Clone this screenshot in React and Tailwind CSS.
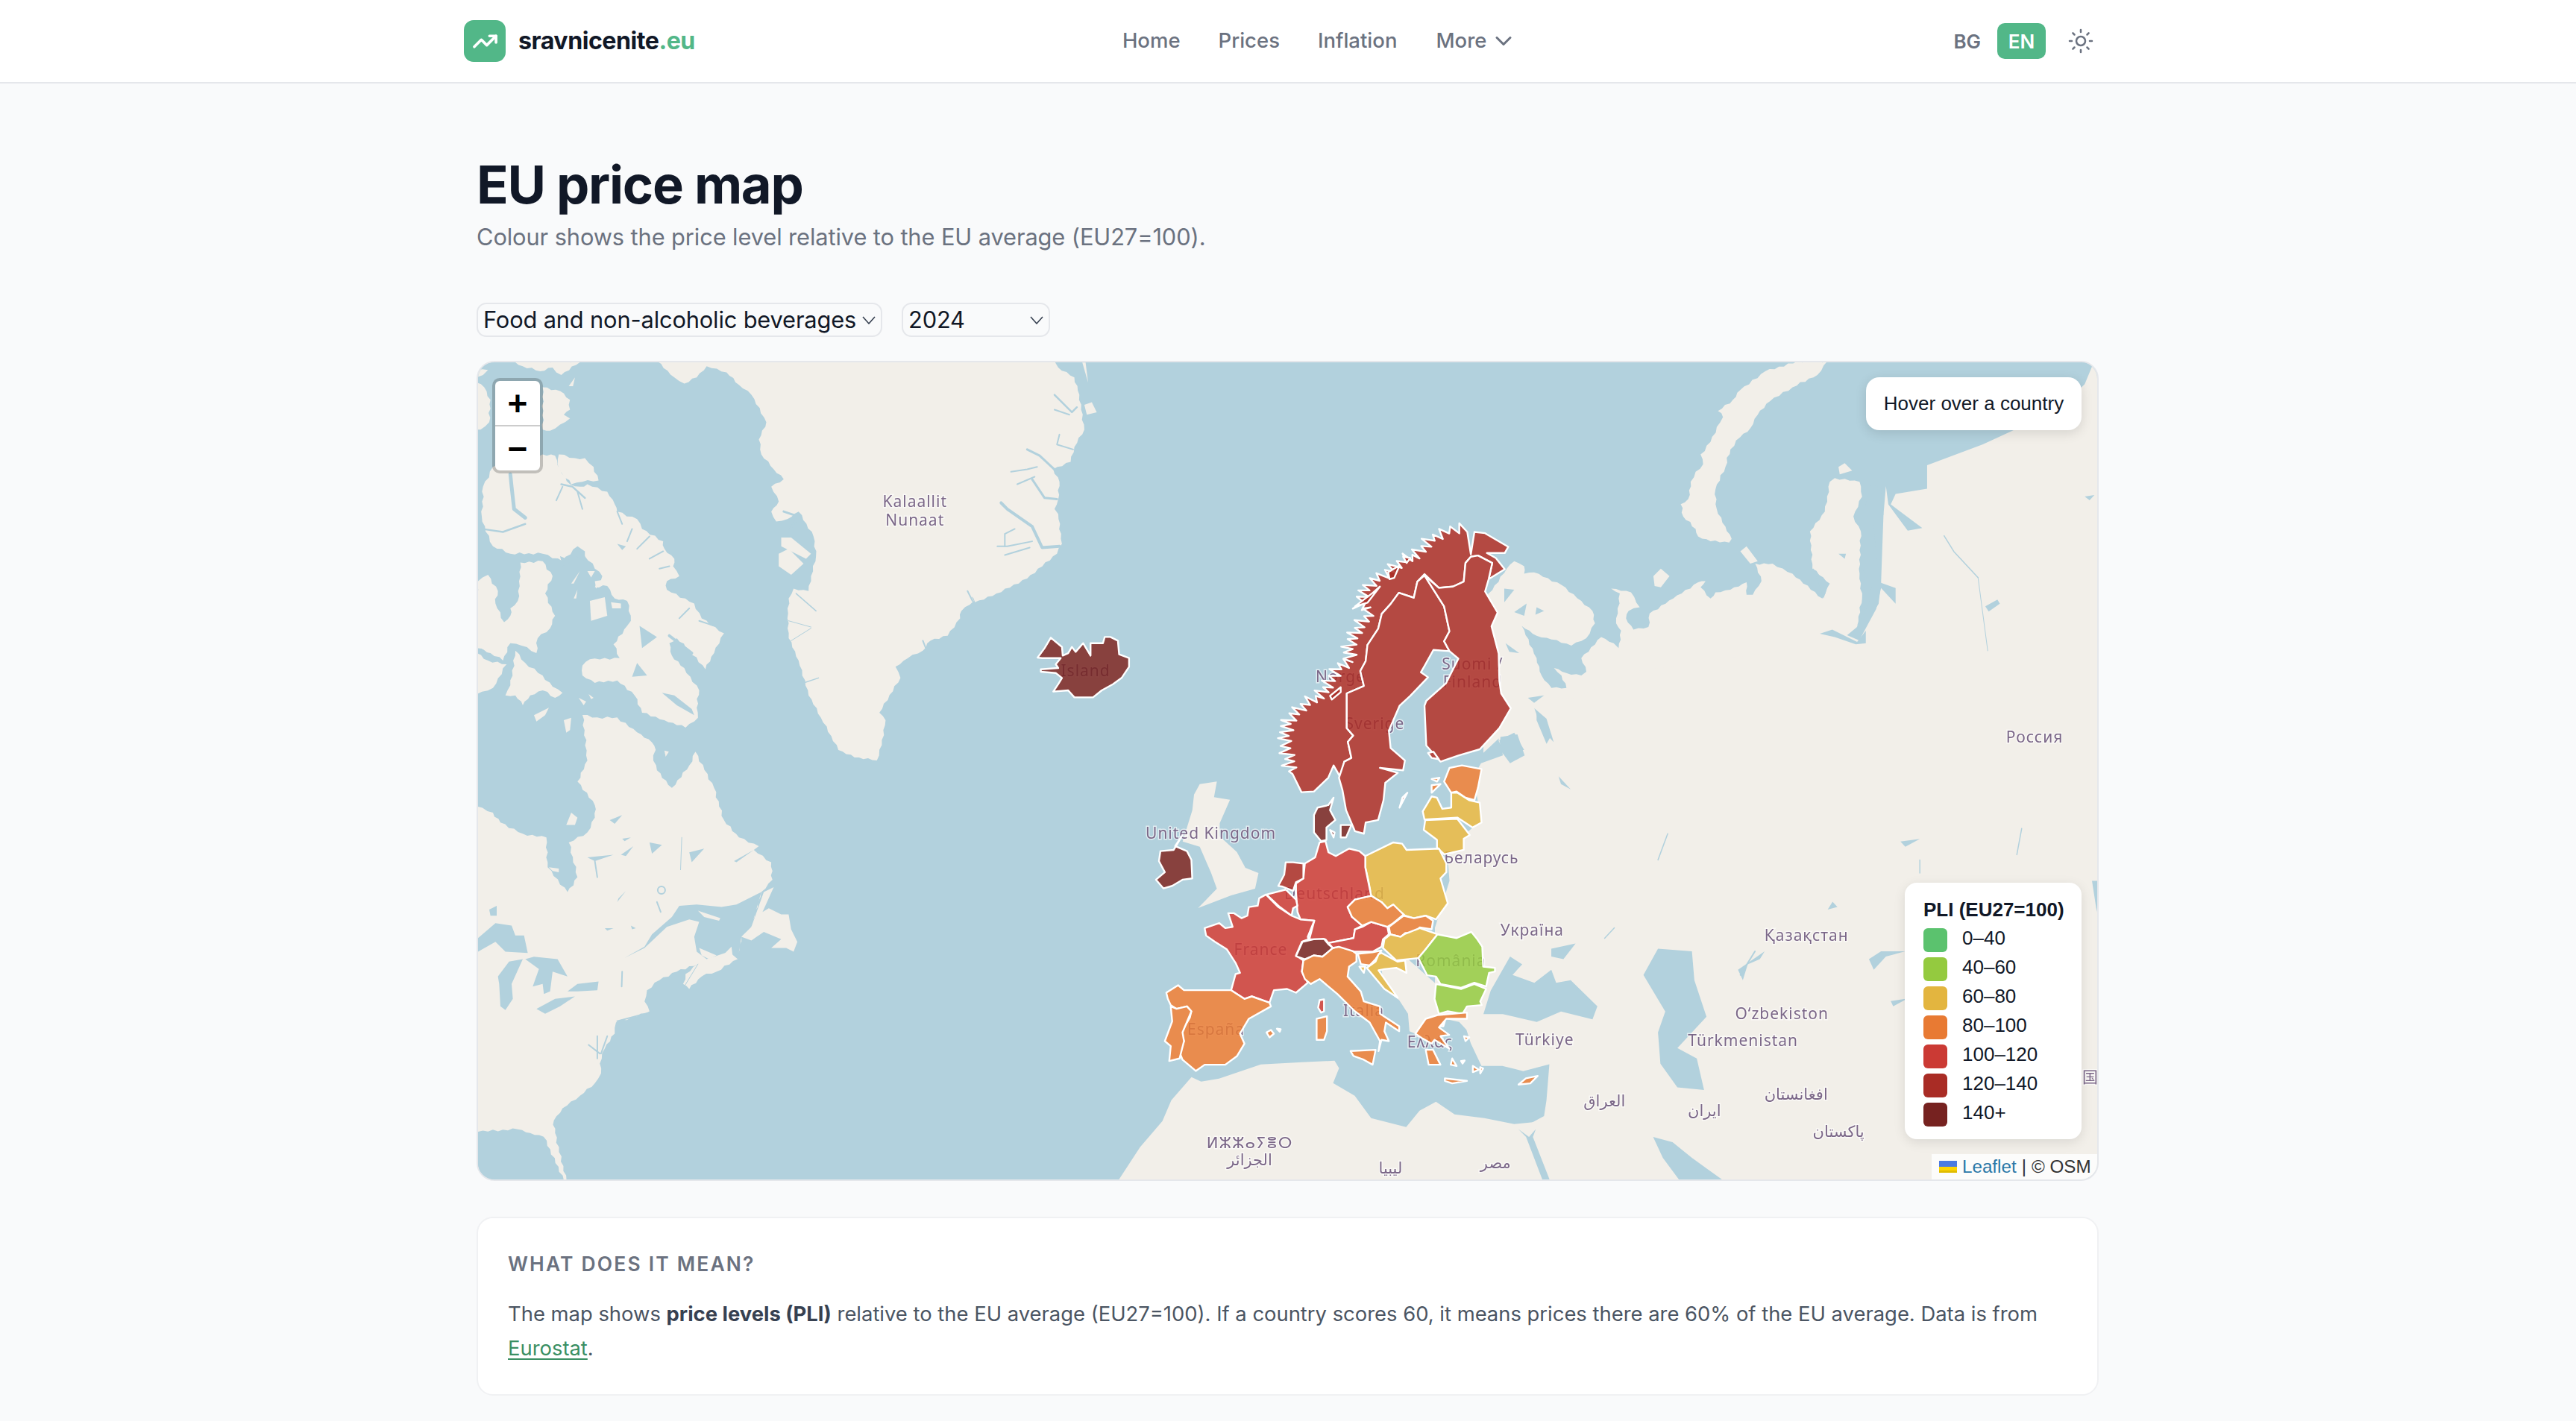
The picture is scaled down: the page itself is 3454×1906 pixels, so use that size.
import React from "react";
import { TrendingUp, ChevronDown, Sun } from "lucide-react";

const Z8 = "translate(1800 480) scale(.6505 .7015)";
const Z7 = "translate(640 480) scale(.7653 .7015)";
const Z3 = "translate(1350 680) scale(.4783 .3333)";
const Z4 = "translate(1500 1100) scale(.3954 .3333)";
const A = "translate(640 486) scale(.3333)";
const B = "translate(640 1000) scale(.3333)";
const G = "translate(1030 486) scale(.3333)";
const D = "translate(1980 486) scale(.3333)";

const LAND = "#f2efe9";
const WATER = "#b2d1dd";
const C = { g: "#94ca3f", y: "#e3b53f", o: "#e87a33", r: "#cb3a34", d: "#a92c25", x: "#762220" };

function jag(str, amp = 16, n = 4, closed = false) {
  const p = str.trim().split(/\s+/).map((s) => s.split(",").map(Number));
  if (closed) p.push(p[0]);
  const out = [];
  let k = 0;
  for (let i = 0; i < p.length - 1; i++) {
    const [a, b] = p[i];
    const [c, d] = p[i + 1];
    const len = Math.hypot(c - a, d - b) || 1;
    const nx = -(d - b) / len;
    const ny = (c - a) / len;
    const m = Math.max(1, Math.round((len / 40) * n));
    for (let j = 0; j < m; j++) {
      const t = j / m;
      k++;
      const o = j === 0 && closed ? 0 : (k % 2 ? 1 : -0.65) * amp * (0.3 + 0.7 * Math.abs(Math.sin(k * 2.3)));
      out.push(`${(a + (c - a) * t + nx * o).toFixed(1)},${(b + (d - b) * t + ny * o).toFixed(1)}`);
    }
  }
  if (!closed) out.push(p[p.length - 1].join(","));
  return out.join(" ");
}
const rough = (list, amp = 5, n = 2) => list.map((s) => jag(s, amp, n, true));

const landA = rough([
  "130,-5 415,-5 395,10 335,50 315,40 300,20 250,35 180,15",
  "-5,30 40,30 20,50 -5,60",
  "260,100 330,115 370,150 370,190 345,210 370,225 330,250 290,275 260,270",
  "-5,80 25,100 50,150 45,240 10,270 -5,270",
  "15,620 20,500 60,420 150,390 260,370 310,375 330,430 370,490 410,500 440,490 520,520 550,570 560,600 640,630 660,670 745,720 750,750 790,790 785,820 810,860 760,880 760,915 870,970 900,1030 990,1090 950,1170 915,1235 850,1160 800,1110 770,1130 780,1180 830,1230 890,1320 880,1390 885,1430 835,1470 750,1440 660,1410 630,1340 560,1280 470,1290 420,1260 420,1220 450,1195 570,1190 545,1135 600,1060 615,1040 600,960 550,950 520,900 470,905 500,860 430,780 400,740 340,800 260,770 130,770 60,740 30,680",
  "325,370 390,385 430,385 465,420 485,475 420,480 375,490 340,450 320,410",
  "-5,950 0,880 40,855 80,920 70,970 105,1045 130,1020 130,990 160,960 165,880 170,805 260,800 300,860 270,930 310,1020 290,1070 240,1110 235,1170 175,1140 130,1130 100,1200 50,1170 -5,1150",
  "-5,1170 40,1200 115,1215 60,1310 -5,1335",
  "150,1160 190,1210 260,1260 300,1305 340,1330 310,1350 260,1320 210,1340 180,1380 150,1340 110,1340 130,1300",
]);
const islesA = [
  "225,1420 285,1390 270,1420 235,1445",
  "345,1440 375,1430 370,1480 355,1490",
  "405,1350 435,1365 425,1380",
  "445,1335 465,1350 455,1355",
  "375,890 410,840 385,890",
  "440,840 470,840 455,865",
  "470,880 505,875 475,910",
  "385,950 400,915 395,950",
  "450,960 510,945 520,1020 455,1040",
  "535,965 575,970 575,990 540,990",
  "365,95 390,60 382,95",
];
const waterA = [
  "650,1060 720,1105 660,1150",
  "640,1210 680,1260 620,1265",
  "740,1330 800,1380 870,1420 860,1395 790,1340",
  "400,740 430,760 430,800 390,780",
  "330,780 380,800 340,820",
  "560,730 595,740 580,755",
];
const linesA = [
  ["130,450 135,500 145,590 190,625", 5],
  ["30,672 100,682 190,650", 2.5],
  ["335,490 380,500 430,545", 2.5],
  ["340,500 315,555", 2],
  ["400,520 420,590", 2],
  ["560,600 580,650", 2],
  ["620,670 600,720", 2],
  ["690,700 640,750", 2],
  ["745,760 690,790", 2],
  ["770,820 730,830", 2],
  ["850,990 810,1030", 2],
  ["950,1060 890,1040", 2],
  ["770,1100 860,1170", 4],
  ["150,1140 230,1175", 2],
  ["20,1160 70,1200", 3],
];

const mainB =
  "420,-123 480,-113 560,-113 640,-53 700,-13 715,17 705,40 720,100 780,170 850,80 875,25 950,170 990,300 1050,370 1130,405 1110,420 1180,470 1185,540 1140,590 1100,730 1060,770 1045,860 960,910 900,930 850,980 825,960 835,920 885,880 800,910 730,945 680,985 670,1030 690,1070 640,1090 555,1115 550,1160 510,1220 490,1280 495,1320 470,1360 410,1410 340,1460 305,1510 310,1560 356,1750 345,1750 264,1575 210,1560 160,1545 0,1555 -5,1555 -5,245 60,270 90,310 180,355 275,370 280,490 360,590 400,530 365,390 440,350 470,290 470,240 400,145 440,60";
const landB = [jag(mainB, 5, 2, true)];
const waterB = [
  "590,855 670,810 700,760 780,690 810,645 880,640 980,650 1040,640 1140,590 1100,730 1060,770 1045,860 1010,830 920,860 880,830 870,770 890,710 850,700 760,730 670,815",
  "0,775 70,715 135,725 150,765 185,765 200,835 110,830 70,790 0,830",
  "80,930 125,870 180,860 135,960 140,1020 110,1065 90,1050 85,960",
  "190,860 225,850 320,860 360,930 300,910 290,990 265,1000 260,960 220,970 245,900",
  "235,1060 310,1020 390,1010 330,1050 270,1080",
  "360,990 400,960 485,950 480,985 400,990",
  "45,660 75,645 75,685 50,685",
  "440,450 545,440 470,465",
  "690,390 740,400 700,435",
  "850,430 910,415 860,470",
  "580,375 615,370 590,385",
  "530,300 580,280 550,315",
  "1030,465 1110,420 1040,470",
  "560,630 595,585 565,615",
  "510,735 545,735 520,745",
  "615,725 635,735 620,740",
  "575,440 625,405 595,445",
];
const islesB = [
  "1060,770 1100,730 1150,590 1190,570 1145,670 1170,655 1220,680 1250,680 1260,740 1285,790 1270,830 1240,815 1180,815 1220,780 1150,750 1100,785",
  "885,665 975,695 970,705 910,690",
  "890,815 960,845 930,860 900,845",
  "985,845 1020,810 1025,850",
  "285,490 325,495 325,510 300,505",
  "355,320 375,270 400,290 390,320",
  "750,20 768,25 755,45",
];
const linesB = [
  ["480,1170 480,1260", 2],
  ["520,1170 495,1240", 2],
  ["560,1110 690,1075", 2],
  ["580,910 578,970", 2],
  ["445,1205 490,1240", 2],
  ["830,970 885,880", 1],
  ["470,465 480,530", 2],
  ["820,370 815,500", 1],
  ["720,630 735,670", 2],
];

const landG = rough([
  "-600,-5 1150,-5 1165,20 1230,60 1250,130 1270,270 1230,340 1215,400 1145,430 1170,480 1165,550 1150,590 1165,610 1180,730 1160,770 1040,870 900,940 830,965 800,920 825,960 775,1000 770,1030 720,1100 650,1120 620,1160 560,1190 510,1225 530,1270 445,1410 470,1440 455,1540 435,1602 345,1590 280,1560 210,1430 160,1340 120,1200 80,1110 75,1030 80,950 100,910 160,920 170,860 190,780 180,700 120,600 75,630 30,640 10,600 40,560 10,500 60,470 20,430 -30,370 -40,310 -10,240 -70,130 -120,90 -170,40 -250,15 -290,60 -340,85 -380,60 -450,-5",
], 4, 2);
const islesG = [
  "50,705 90,705 170,770 150,790 90,760 50,740",
  "40,770 80,750 140,810 90,855 40,820",
  "1270,170 1300,160 1320,200 1280,210",
  "1262,0 1275,0 1285,80",
];
const linesG = [
  ["1170,740 1100,745 1060,660 960,590 935,565", 4],
  ["1060,720 960,740 920,740", 2],
  ["990,670 950,690 950,740", 2],
  ["1050,745 950,775", 2],
  ["1160,440 1090,375 1040,350", 3],
  ["1080,420 1040,430 975,440", 2],
  ["1060,470 1110,545 1160,550", 3],
  ["1000,490 1070,460", 2],
  ["1225,350 1160,330 1170,290", 2],
  ["1150,130 1220,200 1240,180", 2.5],
  ["1150,190 1210,210", 2],
  ["60,600 120,620 80,680", 3],
  ["110,930 190,1000", 1.5],
  ["80,1040 170,1065", 1],
  ["90,1120 170,1070", 1],
  ["140,1290 200,1270", 1.5],
  ["800,920 820,960", 2],
  ["620,1120 640,1170", 2],
];

const mainD =
  "120,830 150,800 190,820 190,850 230,845 340,895 420,960 465,1000 475,1050 440,1110 380,1140 300,1115 240,1100 180,1060 240,1190 260,1260 300,1310 360,1310 340,1260 310,1230 360,1250 420,1260 440,1245 420,1190 500,1105 550,1130 570,1150 580,1080 560,1050 575,930 540,910 620,925 655,985 610,1000 600,1030 630,1075 690,1065 695,1010 790,950 890,885 920,880 900,905 940,950 960,925 1020,915 1085,885 1085,935 1110,935 1145,880 1120,810 1190,810 1270,850 1390,950 1420,890 1350,830 1340,680 1400,600 1420,480 1440,465 1540,480 1550,540 1515,620 1545,680 1540,850 1550,950 1530,1060 1565,1030 1565,1500 100,1565 60,1400 0,1000";
const landD = [
  jag(mainD, 4, 2, true),
  jag("1160,35 1290,-5 1410,-5 1370,50 1270,100 1180,155 1130,210 1100,265 1060,300 1020,350 1000,420 960,510 965,590 1000,660 1025,710 1015,725 940,720 890,700 880,670 830,620 820,570 850,550 860,480 880,440 910,410 900,370 940,320 965,260 990,220 970,195 1030,150 1060,110", 5, 2, true),
];
const islesD = [
  "1060,760 1085,740 1130,800 1100,810",
  "710,860 740,830 775,860 740,905 715,900",
  "1455,420 1480,405 1510,435 1460,450",
];
const waterD = [
  "1380,1092 1430,1075 1480,1100 1530,1125 1565,1080 1565,1130 1525,1135 1440,1105",
  "110,910 150,915 110,965",
  "150,1005 200,970 190,1020",
  "240,985 270,1000 235,1015",
  "115,1130 170,1170 130,1165",
  "205,1350 270,1340 230,1370",
  "240,1400 300,1500 280,1535 240,1440",
  "90,1520 150,1490 190,1560 100,1565",
  "1455,770 1485,770 1480,790",
  "1350,830 1415,890 1395,950 1355,830",
];

const landZ8 = [
  "290,600 340,660 480,650 600,600 900,560 1000,540 1060,540 1105,470 1110,430 1115,300 1120,245 1125,280 1165,330 1195,325 1130,280 1140,260 1205,250 1205,205 1320,165 1425,120 1480,95 1530,50 1550,5 1575,5 1575,1580 365,1580 365,1475 415,1450 420,1420 426,1351 372,1364 329,1354 286,1354 264,1311 255,1285 240,1270 190,1260 190,1090 220,1000 215,940 285,885 270,800 285,775 330,760 325,725 290,755",
];
const waterZ8 = [
  "1090,240 1110,250 1115,300 1095,320 1100,380 1110,430 1140,440 1140,470 1110,440 1100,480 1065,540 1040,530 1060,515 1085,470 1090,440 1070,400 1070,310",
  "325,725 360,720 375,760 345,775 325,750",
  "395,670 420,690 435,735 410,710",
  "445,800 470,825 450,815",
  "620,1180 650,1130 720,1135 725,1190 750,1260 720,1290 690,1320 730,1340 745,1400 690,1395 655,1350 650,1290 665,1250",
  "815,1170 870,1135 860,1150 835,1160 825,1190",
  "290,1255 305,1210 345,1145 370,1160 350,1180 395,1195 430,1170 440,1195 470,1190 525,1240 515,1265 450,1250 400,1270 330,1255",
  "430,1130 480,1120 455,1150 430,1145",
  "1085,1150 1110,1135 1160,1135 1120,1145 1095,1170",
  "1130,1230 1165,1225 1135,1240",
  "640,1490 680,1500 720,1530 795,1580 700,1580 660,1530",
  "362,1475 378,1490 415,1580 430,1580 392,1490 398,1475 384,1490",
  "1325,475 1350,462 1355,470 1332,485",
  "1150,925 1190,920 1160,935",
  "1010,1040 1020,1050 1000,1055",
  "1530,265 1550,262 1540,272",
  "1555,1060 1545,1000 1560,1000",
];
const linesZ8 = [
  ["1240,340 1260,370 1310,420", 1.5],
  ["1310,420 1330,560", 1],
  ["1400,900 1390,950", 1.5],
  ["650,960 670,910", 1.5],
  ["820,1180 850,1135", 2],
  ["540,1110 560,1090", 1.5],
  ["1190,960 1190,985", 1.5],
];

const balkans = "890,600 980,560 1075,660 1085,780 1040,800 1005,860 985,850 980,780 950,725 900,680";
const cap = "1180,775 1230,745 1245,770 1180,800";
const gb = "1265,815 1295,810 1290,840 1318,845 1300,890 1300,915 1330,945 1345,975 1368,985 1362,1015 1320,1028 1262,1052 1295,1015 1285,985 1265,935 1235,925 1252,865 1255,835";

const africa = "1498,1585 1528,1539 1558,1504 1570,1476 1597,1445 1610,1451 1634,1447 1690,1428 1745,1425 1789,1423 1795,1433 1787,1453 1816,1470 1838,1500 1885,1512 1903,1490 1925,1478 1950,1495 1990,1500 2030,1508 2060,1505 2075,1495 2085,1585";

const nor =
  jag("1275,85 1235,100 1190,130 1150,195 1110,215 1070,265 1020,310 985,390 1020,420 985,490 960,560 965,620 930,650 900,720 880,760 840,790 790,860 780,945 790,1000 800,1075", 26, 3.2) +
  " 825,1148 860,1145 900,1090 915,1040 935,1090 945,1025 965,1010 955,945 970,920 952,890 952,750 1000,720 990,660 1005,620 1010,555 1040,490 1050,430 1075,390 1098,345 1140,365 1150,300 1170,270 1210,325 1250,320 1280,300 1285,225 1300,200 1320,195 1360,225 1350,290 1395,250 1370,205 1345,185 1395,185 1405,160 1345,110 1340,105 1310,100 1300,190 1290,100";
const swe = "1150,300 1170,275 1225,400 1240,500 1225,540 1240,580 1195,575 1170,640 1160,665 1180,685 1130,760 1100,800 1070,900 1075,970 1115,1020 1110,1060 1045,1050 1095,1070 1060,1110 1055,1180 1040,1260 1005,1270 1000,1315 975,1305 950,1220 940,1140 930,1090 945,1025 965,1010 955,945 970,920 952,890 952,750 1000,720 990,660 1005,620 1010,555 1040,490 1050,430 1075,390 1098,345 1140,365";

const countries = [
  [G, C.x, "1135,1108 1180,1145 1183,1180 1205,1170 1220,1145 1235,1165 1265,1130 1295,1180 1295,1130 1345,1130 1352,1105 1375,1105 1405,1120 1410,1175 1450,1190 1450,1225 1420,1270 1385,1295 1340,1320 1305,1348 1230,1348 1205,1320 1145,1325 1165,1295 1180,1270 1155,1250 1095,1245 1095,1235 1165,1230 1155,1215 1175,1190 1100,1190 1082,1188 1110,1150"],
  [Z3, C.d, nor],
  [Z3, C.d, swe],
  [Z3, C.d, "1100,1210 1122,1150 1108,1170"],
  [Z3, C.d, "1170,275 1210,325 1250,320 1280,300 1285,225 1300,200 1320,195 1360,225 1350,290 1340,340 1375,425 1358,480 1378,590 1380,700 1385,750 1412,810 1380,890 1325,975 1265,1000 1215,1025 1175,960 1170,800 1175,780 1230,710 1265,610 1240,580 1225,540 1240,500 1225,400"],
  [Z3, C.d, "1180,990 1195,985 1210,1015 1190,1010"],
  [Z3, C.d, "975,400 1025,345 1045,320 1010,385"],
  [Z3, C.d, "1068,262 1100,235 1085,285 1072,290"],
  [Z3, C.d, "1110,200 1130,205 1120,225"],
  [Z3, C.d, "905,760 935,725 935,745 910,775"],
  [Z3, C.o, "1240,1050 1275,1040 1330,1055 1320,1130 1310,1180 1285,1170 1260,1145 1245,1150 1225,1105"],
  [Z3, C.o, "1190,1095 1212,1090 1205,1105"],
  [Z3, C.o, "1190,1120 1215,1115 1190,1150"],
  [Z3, C.y, "1190,1165 1205,1170 1220,1215 1245,1210 1245,1150 1262,1150 1295,1180 1325,1190 1330,1270 1305,1290 1262,1250 1170,1258 1165,1225"],
  [Z3, C.y, "1172,1260 1262,1255 1297,1320 1280,1335 1280,1380 1225,1398 1205,1370 1205,1340 1168,1300"],
  [Z3, C.x, "915,1170 900,1200 870,1210 860,1240 860,1310 880,1345 895,1340 895,1290 920,1260 905,1220"],
  [Z3, C.x, "935,1280 965,1280 950,1330 935,1330"],
  [Z3, C.x, "905,1300 918,1310 915,1330"],
  [Z4, C.y, "835,145 930,90 960,95 975,120 1085,115 1110,175 1110,210 1090,235 1115,335 1075,400 1040,385 1000,395 970,385 945,360 930,340 910,355 890,330 855,305 845,240 835,190"],
  [Z4, C.r, "680,90 700,85 710,130 735,145 780,115 815,125 835,145 835,190 855,305 800,320 775,350 790,390 825,425 800,440 795,475 710,495 700,480 645,480 662,405 615,400 605,370 600,290 600,255 625,235 630,175 665,150"],
  [Z4, C.d, "565,170 590,170 625,175 625,235 600,250 590,285 555,268 540,265 560,220"],
  [Z4, C.r, "500,300 565,280 600,320 605,345 590,355 585,385 545,350"],
  [Z4, C.r, "290,435 340,415 360,435 385,430 370,375 390,375 415,395 435,385 440,350 470,345 475,315 498,300 540,350 585,385 615,400 662,405 640,470 642,480 620,490 600,545 625,565 620,610 640,655 600,695 570,680 525,685 510,735 450,710 425,720 380,685 395,620 410,615 395,575 365,520 325,490 295,465"],
  [Z4, C.r, "680,725 695,722 695,770 685,775 675,755"],
  [Z4, C.x, "622,490 660,480 695,478 710,500 725,515 690,550 660,545 630,560 600,548"],
  [Z4, C.o, "625,565 660,545 690,550 725,515 745,510 775,512 805,538 805,570 780,590 775,630 820,690 830,730 885,750 885,780 950,830 950,850 905,815 900,850 915,890 890,885 880,930 885,890 850,815 800,770 740,700 680,640 650,660 630,640 620,610"],
  [Z4, C.o, "785,930 870,925 860,985 830,965 795,950"],
  [Z4, C.o, "670,800 705,790 705,850 695,885 670,885"],
  [Z4, C.r, "800,440 825,430 855,410 910,430 915,460 895,480 890,510 860,530 800,530 745,510 725,515 710,495 795,475"],
  [Z4, C.o, "775,350 800,320 855,305 890,330 910,355 930,340 965,380 930,415 910,430 855,410 825,425 790,390"],
  [Z4, C.o, "915,430 965,385 1000,395 1040,385 1065,405 1060,440 1020,432 1000,455 970,455 955,470 920,460"],
  [Z4, C.y, "900,480 920,460 955,470 970,458 1020,435 1080,460 1040,520 1020,555 940,565 895,515"],
  [Z4, C.o, "810,538 860,532 890,525 870,560 850,585 820,580"],
  [Z4, C.y, "880,540 890,535 945,570 970,565 975,615 940,595 900,600 880,605 945,715 900,680 840,595 870,570"],
  [Z4, C.y, "815,590 835,590 830,615"],
  [Z4, C.g, "1040,520 1080,460 1145,475 1195,450 1215,480 1232,510 1235,590 1275,595 1275,610 1255,615 1245,670 1205,655 1160,675 1090,660 1075,630 1045,625 1015,555"],
  [Z4, C.g, "1075,660 1160,680 1205,660 1245,680 1225,730 1230,745 1180,750 1165,780 1115,770 1085,780 1070,720"],
  [Z4, C.o, "1005,860 1040,800 1080,785 1180,775 1180,800 1110,800 1085,835 1120,865 1090,870 1120,920 1070,885 1060,900 1030,880"],
  [Z4, C.o, "1040,925 1065,925 1090,985 1050,985"],
  [Z4, C.o, "1105,1040 1180,1050 1130,1060 1105,1050"],
  [Z4, C.o, "1355,1065 1380,1040 1420,1030 1395,1060"],
  [Z4, C.o, "160,695 200,665 220,685 380,685 425,720 450,710 510,735 515,750 440,800 410,860 425,900 400,950 360,985 290,985 260,1010 215,965 205,935 220,890 210,855 240,795 245,770 230,750 195,760 175,745 165,720"],
  [Z4, C.o, "175,750 195,760 230,750 245,770 215,855 220,890 205,960 170,970 175,910 155,890 180,810"],
  [Z4, C.o, "500,855 515,845 525,860 510,875"],
  [Z4, C.o, "535,840 548,842 545,852"],
  [Z4, C.x, "140,125 185,120 195,100 215,60 190,105 230,125 245,160 248,235 215,240 180,265 150,275 125,240 155,210 135,165"],
  [Z4, C.o, "1090,830 1105,810 1100,830"],
  [Z4, C.o, "1170,870 1188,875 1175,890"],
  [Z4, C.o, "1160,970 1172,968 1165,980"],
  [Z4, C.o, "1130,960 1145,990 1125,985"],
  [Z4, C.o, "1200,990 1220,1005 1200,1015"],
  [Z4, C.o, "1225,995 1235,1000 1225,1020"],
];

const labels = [
  ["Kalaallit", 1226, 680],
  ["Nunaat", 1226, 705],
  ["Island", 1455, 907],
  ["Norge", 1797, 915],
  ["Sverige", 1843, 978],
  ["Suomi /", 1974, 898],
  ["Finland", 1974, 922],
  ["United Kingdom", 1623, 1125],
  ["Беларусь", 1986, 1158],
  ["Deutschland", 1789, 1206],
  ["France", 1690, 1281],
  ["Україна", 2054, 1255],
  ["România", 1945, 1296],
  ["Italia", 1828, 1363],
  ["España", 1630, 1388],
  ["Ελλάς", 1917, 1405],
  ["Türkiye", 2071, 1402],
  ["Қазақстан", 2422, 1262],
  ["O‘zbekiston", 2389, 1367],
  ["Türkmenistan", 2337, 1403],
  ["Россия", 2728, 996],
  ["العراق", 2151, 1484],
  ["ايران", 2285, 1497],
  ["افغانستان", 2408, 1475],
  ["پاکستان", 2465, 1525],
  ["ليبيا", 1864, 1574],
  ["مصر", 2005, 1567],
  ["ⵍⵣⵣⴰⵢⴻⵔ", 1675, 1540],
  ["الجزائر", 1675, 1563],
];

const Polys = ({ t, list, fill }) => (
  <g transform={t} fill={fill}>
    {list.map((p, i) => (
      <polygon key={i} points={p} />
    ))}
  </g>
);
const Lines = ({ t, list }) => (
  <g transform={t} fill="none" stroke={WATER} strokeLinecap="round" strokeLinejoin="round">
    {list.map(([p, w], i) => (
      <polyline key={i} points={p} strokeWidth={w} vectorEffect="non-scaling-stroke" />
    ))}
  </g>
);

function MapArt() {
  return (
    <>
      <svg viewBox="640 486 2172 1096" className="absolute inset-0 w-full h-full blur-[0.7px]">
        <rect x="640" y="486" width="2172" height="1096" fill={WATER} />
        <Polys t={A} list={landA} fill={LAND} />
        <Polys t={B} list={landB} fill={LAND} />
        <Polys t={G} list={landG} fill={LAND} />
        <Polys t={D} list={landD} fill={LAND} />
        <Polys t={Z8} list={landZ8} fill={LAND} />
        <polygon points={africa} fill={LAND} />
        <Polys t={Z4} list={[balkans, cap]} fill={LAND} />
        <Polys t={Z7} list={[gb]} fill={LAND} />
        <Polys t={A} list={waterA} fill={WATER} />
        <Polys t={B} list={waterB} fill={WATER} />
        <Polys t={D} list={waterD} fill={WATER} />
        <Polys t={Z8} list={waterZ8} fill={WATER} />
        <Polys t={A} list={islesA} fill={LAND} />
        <Polys t={B} list={islesB} fill={LAND} />
        <Polys t={G} list={islesG} fill={LAND} />
        <Polys t={D} list={islesD} fill={LAND} />
        <Lines t={A} list={linesA} />
        <Lines t={B} list={linesB} />
        <Lines t={G} list={linesG} />
        <Lines t={Z8} list={linesZ8} />
        <circle cx="886" cy="1194" r="5" fill="none" stroke={WATER} strokeWidth="2" />
        {countries.map(([t, , p], i) => (
          <polygon key={i} transform={t} points={p} fill={LAND} />
        ))}
        <g
          className="font-['Noto_Sans','DejaVu_Sans','Noto_Sans_CJK_SC',sans-serif] text-[21px]"
          fill="#7b6788"
          stroke="#ffffff"
          strokeOpacity="0.6"
          strokeWidth="3"
          paintOrder="stroke"
          textAnchor="middle"
          letterSpacing="1"
        >
          {labels.map(([s, x, y]) => (
            <text key={s} x={x} y={y}>
              {s}
            </text>
          ))}
          <text x="2803" y="1452">国</text>
        </g>
      </svg>
      <svg viewBox="640 486 2172 1096" className="absolute inset-0 w-full h-full">
        {countries.map(([t, c, p], i) => (
          <polygon
            key={i}
            transform={t}
            points={p}
            fill={c}
            fillOpacity="0.85"
            stroke="#ffffff"
            strokeWidth="2.4"
            strokeLinejoin="round"
            vectorEffect="non-scaling-stroke"
          />
        ))}
      </svg>
    </>
  );
}

const legend = [
  ["0–40", "bg-[#5bc26e]"],
  ["40–60", "bg-[#94ca3f]"],
  ["60–80", "bg-[#e3b53f]"],
  ["80–100", "bg-[#e87a33]"],
  ["100–120", "bg-[#cb3a34]"],
  ["120–140", "bg-[#a92c25]"],
  ["140+", "bg-[#762220]"],
];

function Select({ w, children }) {
  return (
    <div className={`relative ${w} h-[46px]`}>
      <select className="w-full h-full appearance-none bg-transparent border-2 border-[#e5e7eb] rounded-[13px] pl-[7px] py-0 text-[30.8px] leading-[38px] tracking-[-0.15px] text-[#111827] outline-none">
        {children}
      </select>
      <svg viewBox="0 0 18 11" className="absolute right-[9px] top-[18px] w-[18px] h-[11px]" fill="none" stroke="#374151" strokeWidth="1.6">
        <path d="M1 1l8 9 8-9" />
      </svg>
    </div>
  );
}

export default function App() {
  return (
    <div className="min-h-screen bg-[#f9fafb] font-['Inter',sans-serif] pb-[35px]">
      <header className="h-[112px] bg-white border-b-2 border-[#e5e7eb] flex items-center pl-[622px] pr-[622px]">
        <div className="flex items-center gap-[17px]">
          <div className="w-[56px] h-[56px] rounded-[13px] bg-[#52b788] flex items-center justify-center">
            <TrendingUp size={35} color="#ffffff" strokeWidth={2.5} />
          </div>
          <span className="text-[32.2px] font-bold tracking-[-0.5px] text-[#111827]">
            sravnicenite<span className="text-[#52b788]">.eu</span>
          </span>
        </div>
        <nav className="flex items-center ml-[573px] gap-[51px] text-[27.5px] font-medium text-[#6b7280]">
          <span>Home</span>
          <span>Prices</span>
          <span>Inflation</span>
          <span className="flex items-center gap-[5px] pl-[1px]">
            More
            <ChevronDown size={36} strokeWidth={2} />
          </span>
        </nav>
        <div className="ml-auto flex items-center">
          <span className="text-[26px] font-semibold text-[#6b7280] mr-[22px]">BG</span>
          <span className="w-[65px] h-[48px] rounded-[10px] bg-[#52b788] text-white text-[26px] font-semibold flex items-center justify-center mr-[29px]">
            EN
          </span>
          <Sun size={36} color="#6b7280" strokeWidth={1.7} className="mr-[24px]" />
        </div>
      </header>

      <main className="w-[2175px] ml-[639px] pt-[97px]">
        <h1 className="text-[70.4px] leading-[77px] font-bold tracking-[-1.3px] text-[#111827]">EU price map</h1>
        <p className="mt-[10px] text-[30.8px] leading-[44px] tracking-[-0.1px] text-[#6b7280]">
          Colour shows the price level relative to the EU average (EU27=100).
        </p>

        <div className="mt-[66px] flex gap-[26px]">
          <Select w="w-[544px]">
            <option>Food and non-alcoholic beverages</option>
          </Select>
          <Select w="w-[199px]">
            <option>2024</option>
          </Select>
        </div>

        <section className="relative mt-[32px] h-[1100px] rounded-[24px] border-2 border-[#e5e7eb] overflow-hidden bg-[#b2d1dd] font-['Liberation_Sans',sans-serif]">
          <MapArt />

          <div className="absolute left-[19px] top-[21px] w-[68px] rounded-[10px] border-[4px] border-black/20 bg-white bg-clip-padding overflow-hidden">
            <div className="h-[61px] flex items-center justify-center border-b-2 border-[#cccccc] text-[46px] font-bold leading-none text-black">+</div>
            <div className="h-[59px] flex items-center justify-center text-[46px] font-bold leading-none text-black">−</div>
          </div>

          <div className="absolute right-[21px] top-[20px] h-[71px] w-[289px] rounded-[18px] bg-white shadow-[0_4px_16px_rgba(0,0,0,0.12)] flex items-center justify-center text-[26px] text-[#111827]">
            Hover over a country
          </div>

          <div className="absolute right-[21px] bottom-[54px] w-[237px] h-[344px] rounded-[16px] bg-white shadow-[0_4px_16px_rgba(0,0,0,0.1)] pl-[25px] pt-[20px]">
            <div className="text-[26px] leading-[32px] font-bold text-[#111827] mb-[9px]">PLI (EU27=100)</div>
            <ul className="flex flex-col gap-[7px]">
              {legend.map(([t, c]) => (
                <li key={t} className="flex items-center h-[32px] text-[26px] text-[#111827]">
                  <span className={`w-[32px] h-[32px] rounded-[6px] mr-[20px] ${c}`} />
                  <span className="-mt-[5px]">{t}</span>
                </li>
              ))}
            </ul>
          </div>

          <div className="absolute right-0 bottom-0 h-[34px] w-[222px] bg-white/80 flex items-center pl-[10px] text-[24.2px] text-[#333333] whitespace-nowrap">
            <svg viewBox="0 0 24 16" className="w-[24px] h-[16px] mr-[7px]">
              <rect width="24" height="8" fill="#4c7be1" />
              <rect y="8" width="24" height="8" fill="#ffd500" />
              <rect y="13" width="24" height="3" fill="#e0bc00" />
            </svg>
            <span className="text-[#2b78a8]">Leaflet</span>
            <span className="mx-[7px]">|</span>
            <span>© OSM</span>
          </div>
        </section>

        <section className="mt-[48px] rounded-[22px] border-2 border-[#f0f1f3] bg-white h-[240px] px-[40px] pt-[43px]">
          <h2 className="text-[26.4px] leading-[36px] font-semibold uppercase tracking-[2.2px] text-[#6b7280]">What does it mean?</h2>
          <p className="mt-[26px] text-[27.4px] leading-[46px] text-[#4b5563]">
            The map shows <strong className="font-bold text-[#374151]">price levels (PLI)</strong> relative to the EU average (EU27=100). If a country scores 60, it means prices there are 60% of the EU average. Data is from{" "}
            <a className="text-[#3a8f63] underline decoration-2 underline-offset-4">Eurostat</a>.
          </p>
        </section>
      </main>
    </div>
  );
}
